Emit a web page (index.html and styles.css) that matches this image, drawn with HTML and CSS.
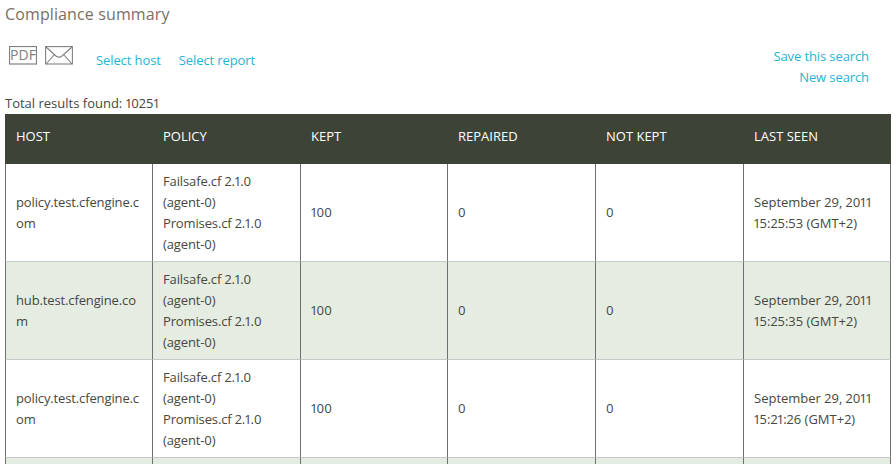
FILE: index.html
```html
<!DOCTYPE html>
<html lang="en">
<head>
<meta charset="utf-8">
<title>Compliance summary</title>
<link rel="stylesheet" href="styles.css">
</head>
<body>
<h1 class="title">Compliance summary</h1>
<div class="toolbar">
  <div class="tools">
    <div class="icons">
      <svg class="icon-pdf" width="28" height="19" viewBox="0 0 28 19" aria-label="PDF"><rect x="0.5" y="0.5" width="27" height="17.5" fill="none" stroke="#808080" stroke-width="1.2"/><text x="14" y="14" text-anchor="middle" class="pdf-text">PDF</text></svg>
      <svg class="icon-mail" width="28" height="19" viewBox="0 0 28 19" aria-label="Mail"><rect x="0.6" y="0.6" width="26.8" height="17.4" fill="none" stroke="#808080" stroke-width="1.1"/><path d="M1 1 L11 10 Q14 12.5 17 10 L27 1 M1 18 L9.5 8.5 M27 18 L18.5 8.5" fill="none" stroke="#808080" stroke-width="1.1"/></svg>
    </div>
    <a class="link" href="#">Select host</a>
    <a class="link" href="#">Select report</a>
  </div>
  <div class="actions">
    <a class="link" href="#">Save this search</a>
    <a class="link" href="#">New search</a>
  </div>
</div>
<div class="total">Total results found: 10251</div>
<table class="results">
  <colgroup><col class="c1"><col class="c2"><col class="c3"><col class="c4"><col class="c5"><col class="c6"></colgroup>
  <thead>
    <tr><th>HOST</th><th>POLICY</th><th>KEPT</th><th>REPAIRED</th><th>NOT KEPT</th><th>LAST SEEN</th></tr>
  </thead>
  <tbody>
    <tr>
      <td class="tight">policy.test.cfengine.com</td>
      <td class="tight">Failsafe.cf 2.1.0 (agent-0)<br>Promises.cf 2.1.0 (agent-0)</td>
      <td class="num">100</td><td class="num">0</td><td class="num">0</td>
      <td>September 29, 2011 15:25:53 (GMT+2)</td>
    </tr>
    <tr class="alt">
      <td class="tight">hub.test.cfengine.com</td>
      <td class="tight">Failsafe.cf 2.1.0 (agent-0)<br>Promises.cf 2.1.0 (agent-0)</td>
      <td class="num">100</td><td class="num">0</td><td class="num">0</td>
      <td>September 29, 2011 15:25:35 (GMT+2)</td>
    </tr>
    <tr>
      <td class="tight">policy.test.cfengine.com</td>
      <td class="tight">Failsafe.cf 2.1.0 (agent-0)<br>Promises.cf 2.1.0 (agent-0)</td>
      <td class="num">100</td><td class="num">0</td><td class="num">0</td>
      <td>September 29, 2011 15:21:26 (GMT+2)</td>
    </tr>
    <tr class="alt">
      <td class="tight">hub.test.cfengine.com</td>
      <td class="tight">Failsafe.cf 2.1.0 (agent-0)<br>Promises.cf 2.1.0 (agent-0)</td>
      <td class="num">100</td><td class="num">0</td><td class="num">0</td>
      <td>September 29, 2011 15:21:08 (GMT+2)</td>
    </tr>
  </tbody>
</table>
</body>
</html>
```
FILE: styles.css
```css
html { overflow: hidden; height: 100%; }
body {
  margin: 0;
  padding: 0 5px;
  width: 886px;
  font-family: "Open Sans", sans-serif;
  font-size: 13px;
  line-height: 21px;
  color: #45483e;
  background: #fff;
  font-variant-numeric: proportional-nums;
}
.title {
  margin: 0;
  padding-top: 3px;
  font-size: 16px;
  font-weight: 400;
  line-height: 22px;
  letter-spacing: 0.12px;
  color: #7b6f62;
}
.toolbar {
  display: flex;
  justify-content: space-between;
  height: 68px;
  padding-top: 21px;
  box-sizing: border-box;
}
.tools { display: flex; align-items: flex-start; gap: 18px; }
.icons { display: flex; gap: 8px; padding-left: 4px; margin-right: 5px; }
.tools .link { padding-top: 4px; letter-spacing: -0.1px; }
.actions {
  display: flex;
  flex-direction: column;
  align-items: flex-end;
  padding-right: 22px;
  letter-spacing: -0.1px;
}
.link { color: #1fb4d2; text-decoration: none; }
.pdf-text { font: 14px "Open Sans", sans-serif; fill: #808080; }
.icon-pdf, .icon-mail { display: block; }
.total { height: 21px; line-height: 21px; }
.results {
  width: 886px;
  table-layout: fixed;
  border-collapse: separate;
  border-spacing: 0;
}
.c1 { width: 147px; }
.c2 { width: 148px; }
.c3 { width: 147px; }
.c4 { width: 148px; }
.c5 { width: 148px; }
.c6 { width: 148px; }
.results th {
  height: 50px;
  padding: 0 10px 6px 11px;
  background: #3e4338;
  color: #fff;
  font-weight: 400;
  text-align: left;
  box-sizing: border-box;
}
.results td {
  height: 98px;
  box-sizing: border-box;
  padding: 7px 10px 6px;
  border-left: 1px solid #6f6f6f;
  border-bottom: 1px solid #c8c8c8;
  word-break: break-all;
  overflow-wrap: anywhere;
}
.results td:last-child { border-right: 1px solid #6f6f6f; }
.results td:nth-child(2), .results td:nth-child(6) { word-break: normal; }
.results td.tight { letter-spacing: -0.13px; }
.results td.num { padding-bottom: 8px; }
.alt td { background: #e5ece1; }
```
